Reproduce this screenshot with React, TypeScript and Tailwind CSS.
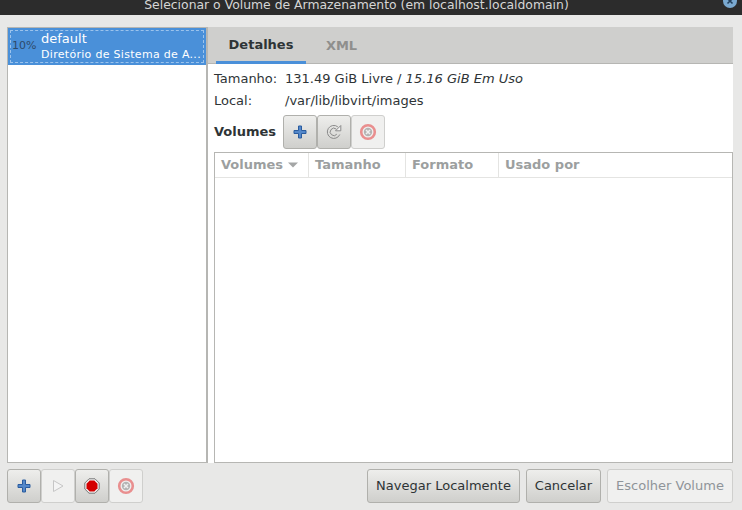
const font = { fontFamily: '"DejaVu Sans", sans-serif' }

function PlusIcon() {
  return (
    <svg width="16" height="16" viewBox="0 0 16 16">
      <path d="M6.500 2h3v4.500H14v3H9.500v4.500h-3V9.500H2v-3h4.500z" fill="#5488ca" stroke="#2a5c9f" strokeWidth="1" strokeLinejoin="round" />
    </svg>
  )
}

function StopIcon() {
  return (
    <svg width="18" height="18" viewBox="0 0 18 18">
      <circle cx="9" cy="9" r="6.800" fill="#f0f0ef" stroke="#e98f8f" strokeWidth="2.600" />
      <circle cx="9" cy="9" r="4.200" fill="#b4b4b4" />
      <path d="M7 7l4 4M11 7l-4 4" stroke="#f0f0f0" strokeWidth="1.500" />
    </svg>
  )
}

function RefreshIcon() {
  return (
    <svg width="18" height="18" viewBox="0 0 18 18" fill="none">
      <path d="M14.800 11.500A6.500 6.500 0 1 1 12.800 3.800" stroke="#8a8a8a" strokeWidth="1" />
      <path d="M11.800 11.200A3.700 3.700 0 1 1 11.200 6" stroke="#8a8a8a" strokeWidth="1" />
      <path d="M10.500 7.800h5.300V2.500z" fill="#f4f4f4" stroke="#8a8a8a" strokeWidth="1" strokeLinejoin="round" />
    </svg>
  )
}

function PlayIcon() {
  return (
    <svg width="16" height="16" viewBox="0 0 16 16">
      <path d="M3.500 2.500L13 8l-9.500 5.500z" fill="#f4f4f4" stroke="#c6c6c6" strokeWidth="1" />
    </svg>
  )
}

function RecordIcon() {
  return (
    <svg width="16" height="16" viewBox="0 0 16 16">
      <path d="M5 .8h6L15.200 5v6L11 15.200H5L.8 11V5z" fill="#f2f2f2" stroke="#777" strokeWidth="1" />
      <path d="M5.700 2.500h4.600l3.200 3.200v4.600l-3.200 3.200H5.700l-3.200-3.200V5.700z" fill="#d40000" />
    </svg>
  )
}

function ToolButton({ children, disabled }: { children: React.ReactNode; disabled?: boolean }) {
  return (
    <div
      className={
        disabled
          ? 'w-[34px] h-[34px] rounded-[3px] border border-[#cfcfcd] bg-[#f0f0ef] flex items-center justify-center'
          : 'w-[34px] h-[34px] rounded-[3px] border border-[#b0b0ac] bg-gradient-to-b from-[#eeeeec] to-[#cfcfcc] flex items-center justify-center'
      }
    >
      {children}
    </div>
  )
}

function TextButton({ label, width, disabled }: { label: string; width: string; disabled?: boolean }) {
  return (
    <div
      className={
        (disabled
          ? 'border-[#cfcfcd] bg-[#f0f0ef] text-[#8f9499] '
          : 'border-[#b0b0ac] bg-gradient-to-b from-[#eeeeec] to-[#cfcfcc] text-[#2e3436] ') +
        width +
        ' h-[34px] rounded-[3px] border flex items-center justify-center text-[13px]'
      }
    >
      {label}
    </div>
  )
}

export default function App() {
  return (
    <div className="w-[742px] h-[510px] bg-[#e8e8e7] flex flex-col overflow-hidden text-[#2e3436]" style={font}>
      {/* Title bar */}
      <header className="h-[15px] bg-[#2c2c2c] relative flex justify-center overflow-hidden shrink-0 pr-[29px]">
        <span className="text-[12.4px] leading-[10px] text-[#d6d6d6] whitespace-nowrap">
          Selecionar o Volume de Armazenamento (em localhost.localdomain)
        </span>
        <div className="absolute right-[5px] top-[-6px] w-[14px] h-[14px] rounded-full bg-[#7aa9d0] flex items-center justify-center">
          <svg width="8" height="8" viewBox="0 0 8 8">
            <path d="M1.500 1.500l5 5M6.500 1.500l-5 5" stroke="#24405c" strokeWidth="1.600" />
          </svg>
        </div>
      </header>

      <div className="flex flex-col flex-1 pt-[12px] pl-[7px] pr-[9px]">
        <div className="flex h-[436px]">
          {/* Pool list */}
          <aside className="w-[199px] shrink-0 bg-white border-l border-t border-b border-[#b6b6b3]">
            <div className="h-[37px] bg-[#4a90d9] p-[2px]">
              <div className="h-full border border-dashed border-[#9cc3ec] flex items-center">
                <span className="w-[30px] pl-[1px] text-[11px] text-[#2e4a6a] shrink-0">10%</span>
                <div className="min-w-0 text-white">
                  <div className="text-[13px] leading-[15px]">default</div>
                  <div className="text-[11px] leading-[16px] mt-[1px] whitespace-nowrap tracking-[0.3px]">Diretório de Sistema de A...</div>
                </div>
              </div>
            </div>
          </aside>

          <div className="w-[2px] bg-[#b6b6b3] shrink-0" />

          {/* Details */}
          <main className="flex-1 bg-white flex flex-col min-w-0">
            <div className="h-[37px] bg-[#cfcfcd] border-b border-[#b6b6b3] flex pl-[8px] shrink-0">
              <div className="w-[90px] h-[37px] pt-[1px] border-b-[3px] border-[#4a90d9] flex items-center justify-center text-[13px] font-bold">
                Detalhes
              </div>
              <div className="w-[71px] h-[36px] pt-[1px] flex items-center justify-center text-[13px] font-bold text-[#8f8f8d]">XML</div>
            </div>
            <div className="flex-1 flex flex-col pl-[6px] min-h-0">
              <div className="flex text-[13px] leading-[22px] mt-[4px]">
                <span className="w-[71px]">Tamanho:</span>
                <span>
                  131.49 GiB Livre / <i>15.16 GiB Em Uso</i>
                </span>
              </div>
              <div className="flex text-[13px] leading-[22px]">
                <span className="w-[71px]">Local:</span>
                <span>/var/lib/libvirt/images</span>
              </div>
              <div className="flex items-center mt-[3px] mb-[3px]">
                <span className="text-[13px] font-bold w-[69px]">Volumes</span>
                <ToolButton><PlusIcon /></ToolButton>
                <ToolButton><RefreshIcon /></ToolButton>
                <ToolButton disabled><StopIcon /></ToolButton>
              </div>
              <div className="flex-1 border border-[#b6b6b3] bg-white">
                <div className="h-[25px] border-b border-[#e4e4e2] flex text-[13px] font-bold text-[#9c9f9f]">
                  <div className="w-[94px] pl-[6px] border-r border-[#e4e4e2] flex items-center gap-[5px]">
                    Volumes
                    <svg width="10" height="6" viewBox="0 0 10 6"><path d="M0 .5h10L5 5.500z" fill="#a4a6a6" /></svg>
                  </div>
                  <div className="w-[97px] pl-[6px] border-r border-[#e4e4e2] flex items-center">Tamanho</div>
                  <div className="w-[93px] pl-[6px] border-r border-[#e4e4e2] flex items-center">Formato</div>
                  <div className="flex-1 pl-[6px] flex items-center">Usado por</div>
                </div>
              </div>
            </div>
          </main>
        </div>

        {/* Footer buttons */}
        <div className="flex justify-between mt-[6px]">
          <div className="flex">
            <ToolButton><PlusIcon /></ToolButton>
            <ToolButton disabled><PlayIcon /></ToolButton>
            <ToolButton><RecordIcon /></ToolButton>
            <ToolButton disabled><StopIcon /></ToolButton>
          </div>
          <div className="flex gap-[6px]">
            <TextButton label="Navegar Localmente" width="w-[153px]" />
            <TextButton label="Cancelar" width="w-[75px]" />
            <TextButton label="Escolher Volume" width="w-[126px]" disabled />
          </div>
        </div>
      </div>
    </div>
  )
}
